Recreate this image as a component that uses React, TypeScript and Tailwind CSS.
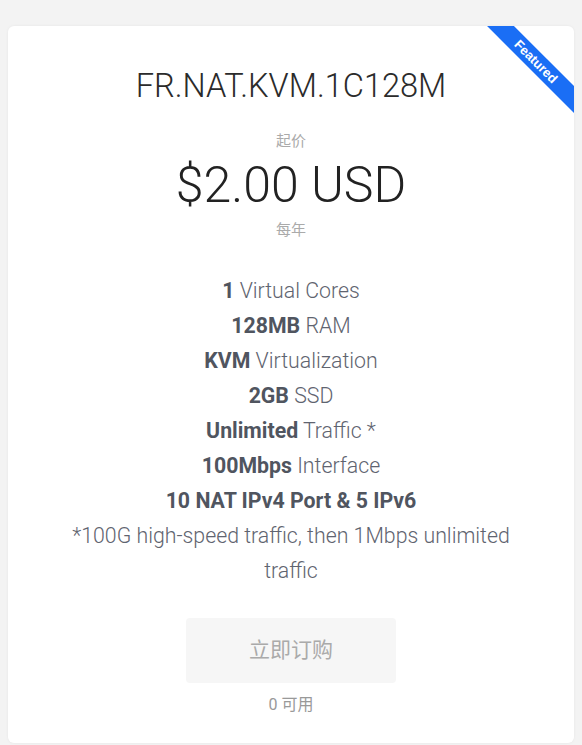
export default function App() {
  const features: [string, string][] = [
    ['1', ' Virtual Cores'],
    ['128MB', ' RAM'],
    ['KVM', ' Virtualization'],
    ['2GB', ' SSD'],
    ['Unlimited', ' Traffic *'],
    ['100Mbps', ' Interface'],
    ['10 NAT IPv4 Port & 5 IPv6', ''],
  ];

  return (
    <div
      className="h-[745px] overflow-hidden bg-[#f3f3f3] px-2 pt-[26px]"
      style={{ fontFamily: 'Roboto, "Noto Sans CJK SC", sans-serif' }}
    >
      <div className="relative overflow-hidden rounded-md bg-white pb-[28px] pt-[40px] text-center shadow-[0_0_3px_rgba(0,0,0,0.06)]">
        {/* Featured ribbon */}
        <div className="absolute left-[448px] top-[26px] flex h-[19px] w-[160px] rotate-45 items-center justify-center bg-[#1a6ef5] text-[13px] font-bold text-white [font-family:'Liberation_Sans',Arial,sans-serif]">
          Featured
        </div>

        <h3 className="text-[32.6px] font-light leading-[40px] text-[#2b2b2b]">FR.NAT.KVM.1C128M</h3>

        <div className="mt-[25px] text-[15px] leading-5 text-[#aaaaaa]">起价</div>
        <div className="mt-[8px] text-[50px] font-light leading-[52px] text-[#222]">$2.00 USD</div>
        <div className="mt-[9px] text-[15px] leading-5 text-[#aaaaaa]">每年</div>

        <ul className="mt-[33px] px-[45px] text-[21.3px] font-light leading-[35px] text-[#5f6470]">
          {features.map(([b, rest]) => (
            <li key={b}>
              <strong className="font-bold text-[#50555f]">{b}</strong>
              {rest}
            </li>
          ))}
          <li>*100G high-speed traffic, then 1Mbps unlimited traffic</li>
        </ul>

        <button
          disabled
          className="mx-auto mt-[30px] block h-[65px] w-[210px] rounded bg-[#f6f6f6] text-[21px] text-[#aaaaaa]"
        >
          立即订购
        </button>
        <div className="mt-[12px] text-[16px] leading-5 text-[#999]">0 可用</div>
      </div>
    </div>
  );
}
